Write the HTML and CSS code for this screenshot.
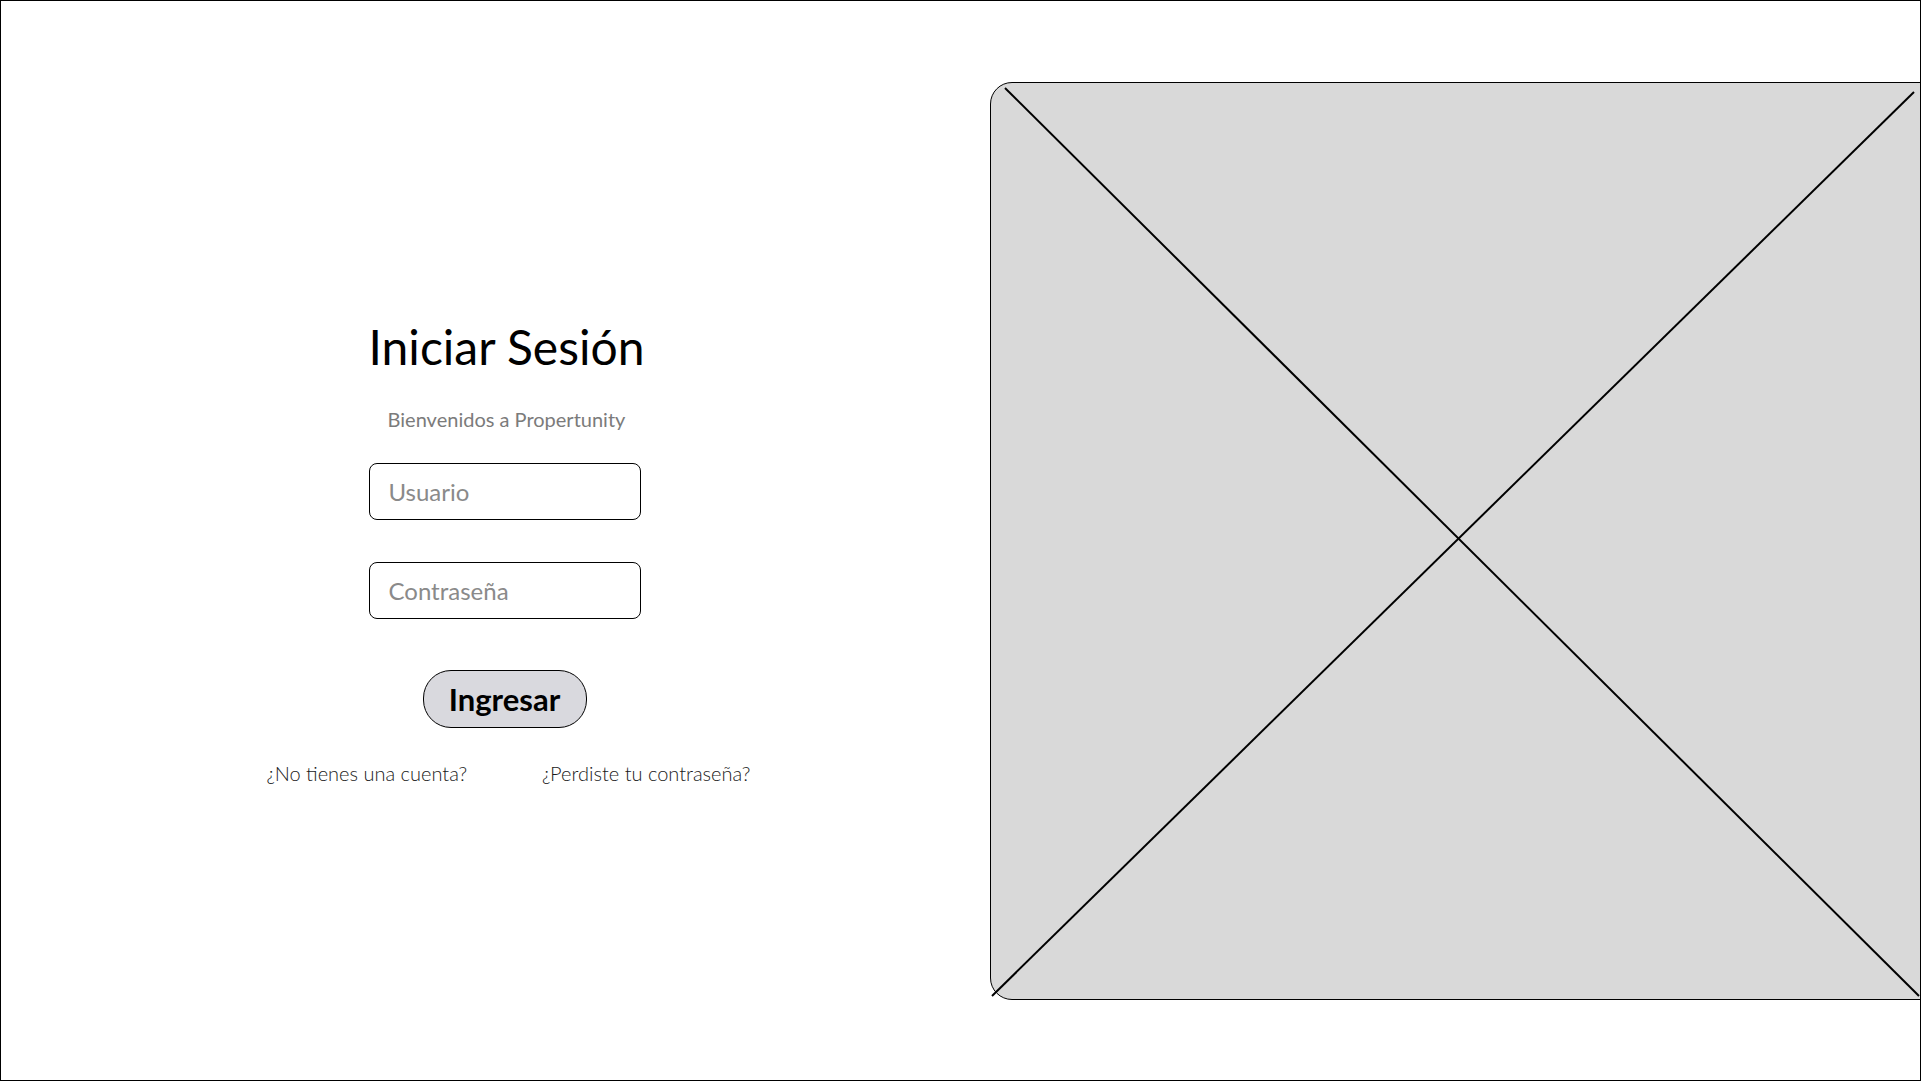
FILE: index.html
```html
<!DOCTYPE html>
<html lang="es">
<head>
<meta charset="utf-8">
<title>Iniciar Sesión</title>
<link rel="stylesheet" href="styles.css">
</head>
<body>
<div class="frame">
  <section class="login">
    <h1 class="title">Iniciar Sesión</h1>
    <p class="subtitle">Bienvenidos a Propertunity</p>
    <input class="field field-user" type="text" placeholder="Usuario">
    <input class="field field-pass" type="password" placeholder="Contraseña">
    <button class="submit" type="button">Ingresar</button>
    <div class="links">
      <a class="link" href="#">¿No tienes una cuenta?</a>
      <a class="link" href="#">¿Perdiste tu contraseña?</a>
    </div>
  </section>
  <section class="visual">
    <div class="placeholder">
      <svg class="cross" viewBox="0 0 960 918" width="960" height="918" aria-hidden="true">
        <line x1="15" y1="6" x2="929" y2="914" stroke="#000" stroke-width="2"/>
        <line x1="2" y1="914" x2="924" y2="10" stroke="#000" stroke-width="2"/>
      </svg>
    </div>
  </section>
</div>
</body>
</html>
```

FILE: styles.css
```css
* { box-sizing: border-box; }

html, body {
  margin: 0;
  padding: 0;
  background: #fff;
}

body {
  font-family: Lato, "Noto Sans", sans-serif;
  color: #000;
}

.frame {
  width: 1921px;
  height: 1081px;
  border: 1px solid #000;
  display: flex;
  overflow: hidden;
}

.login {
  width: 989px;
  flex: none;
  padding-left: 22px;
  padding-top: 317px;
  display: flex;
  flex-direction: column;
  align-items: center;
}

.title {
  margin: 0;
  font-size: 48px;
  font-weight: 400;
  line-height: 58px;
}

.subtitle {
  margin: 31px 0 0;
  font-size: 20px;
  line-height: 24px;
  color: #7b7b7b;
}

.field {
  display: block;
  width: 272px;
  height: 57px;
  margin-right: 4px;
  border: 1px solid #000;
  border-radius: 8px;
  padding: 0 0 0 19px;
  font-family: Lato, "Noto Sans", sans-serif;
  font-size: 24px;
  color: #000;
  background: #fff;
  outline: none;
}

.field::placeholder {
  color: #8a8a8a;
}

.field-user { margin-top: 32px; }
.field-pass { margin-top: 42px; }

.submit {
  margin-top: 51px;
  margin-right: 4px;
  width: 164px;
  height: 58px;
  border: 1px solid #000;
  border-radius: 28px;
  background: #d9d9de;
  font-family: Lato, "Noto Sans", sans-serif;
  font-weight: 700;
  font-size: 31px;
  color: #000;
  padding: 0;
}

.links {
  margin-top: 33px;
  display: flex;
  gap: 75px;
  padding-left: 4px;
}

.link {
  font-size: 20px;
  line-height: 24px;
  font-weight: 300;
  color: #1a1a1a;
  text-decoration: none;
}

.visual {
  flex: none;
  padding-top: 81px;
}

.placeholder {
  position: relative;
  width: 960px;
  height: 918px;
  border: 1px solid #000;
  border-radius: 22px;
  background: #d9d9d9;
}

.cross {
  position: absolute;
  left: -1px;
  top: -1px;
  overflow: visible;
}
```
